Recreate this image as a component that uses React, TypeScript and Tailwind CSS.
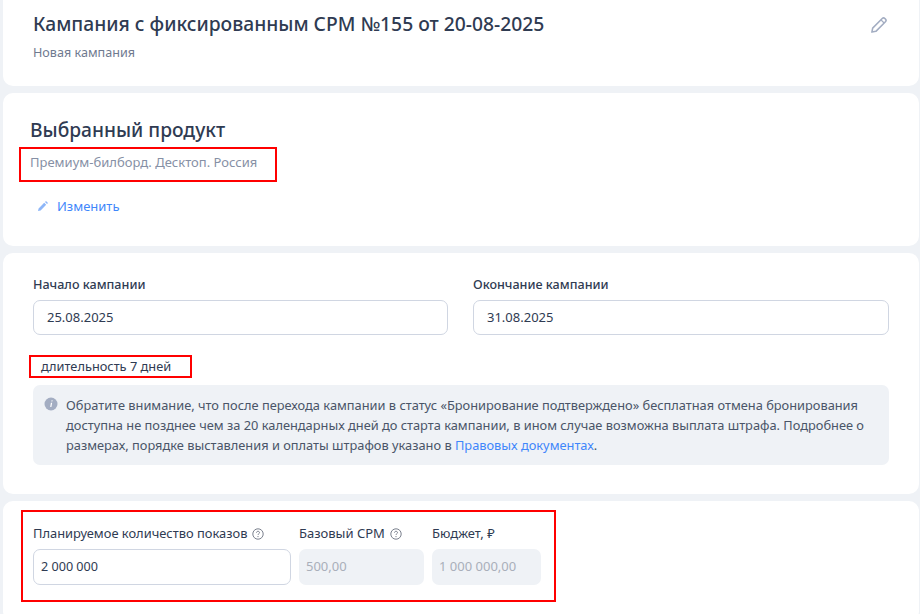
import React from "react";

const font = { fontFamily: '"Noto Sans", sans-serif' };

function Pencil({ className }: { className?: string }) {
  return (
    <svg viewBox="0 0 18 18" fill="none" className={className}>
      <path d="M2.6 15.4l.7-3.6 8.6-8.6a1.7 1.7 0 0 1 2.4 0l.5.5a1.7 1.7 0 0 1 0 2.4l-8.6 8.6-3.6.7z" stroke="currentColor" strokeWidth="1.4" strokeLinejoin="round" />
      <path d="M10.8 4.4l2.8 2.8" stroke="currentColor" strokeWidth="1.2" />
    </svg>
  );
}

function Help() {
  return (
    <svg viewBox="0 0 12 12" fill="none" className="h-[12px] w-[12px] text-[#6b7280]">
      <circle cx="6" cy="6" r="5.2" stroke="currentColor" strokeWidth="0.9" />
      <path d="M4.5 4.7c0-.9.7-1.4 1.5-1.4s1.5.5 1.5 1.3c0 1.2-1.5 1.2-1.5 2.3" stroke="currentColor" strokeWidth="0.9" />
      <circle cx="6" cy="8.6" r="0.6" fill="currentColor" />
    </svg>
  );
}

export default function App() {
  return (
    <div style={font} className="flex h-[614px] w-[920px] flex-col gap-[7px] overflow-hidden bg-[#eff2f6] pl-[3px] pr-[1px] text-[#2f3b52]">
      <section className="relative -mt-[10px] h-[96px] shrink-0 rounded-[10px] bg-white pl-[30px] pt-[20px]">
        <h1 className="text-[19.27px] leading-[28px] font-medium">Кампания с фиксированным СРМ №155 от 20-08-2025</h1>
        <p className="mt-[6px] text-[12.6px] leading-[18px] text-[#6f7a8f]">Новая кампания</p>
        <Pencil className="absolute right-[30px] top-[25px] h-[20px] w-[20px] text-[#a3adc2]" />
      </section>

      <section className="flex h-[153px] shrink-0 flex-col items-start rounded-[10px] bg-white pl-[27px] pt-[23px]">
        <h2 className="text-[19.2px] leading-[28px] font-medium">Выбранный продукт</h2>
        <div className="relative mt-[9px]">
          <p className="text-[13px] leading-[18px] text-[#8690a5]">Премиум-билборд. Десктоп. Россия</p>
          <div className="absolute -left-[11px] -top-[6px] h-[35px] w-[258px] border-[2px] border-[#ff0000]" />
        </div>
        <div className="mt-[26px] flex items-center gap-[8px] pl-[7px] text-[13px] leading-[18px] text-[#3f87fb]">
          <svg viewBox="0 0 12 12" className="h-[12px] w-[12px] text-[#8db6f8]">
            <path d="M1 11l.6-2.6 5.6-5.6 2 2-5.6 5.6zM8 2l1-1 2 2-1 1z" fill="currentColor" />
          </svg>
          <span>Изменить</span>
        </div>
      </section>

      <section className="h-[241px] shrink-0 rounded-[10px] bg-white px-[30px] pt-[23px]">
        <div className="flex gap-[25px]">
          <div className="w-[415px]">
            <label className="block text-[12.6px] leading-[18px] font-medium">Начало кампании</label>
            <div className="mt-[6px] flex h-[35px] items-center rounded-[7px] border border-[#d0d6e2] pl-[13px] text-[13px]">25.08.2025</div>
          </div>
          <div className="w-[416px]">
            <label className="block text-[12.6px] leading-[18px] font-medium">Окончание кампании</label>
            <div className="mt-[6px] flex h-[35px] items-center rounded-[7px] border border-[#d0d6e2] pl-[13px] text-[13px]">31.08.2025</div>
          </div>
        </div>
        <div className="relative mt-[22px] pl-[8px] text-[12.8px] leading-[18px]">
          длительность 7 дней
          <div className="absolute -left-[4px] -top-[2px] h-[23px] w-[163px] border-[2px] border-[#ff0000]" />
        </div>
        <div className="mt-[10px] flex h-[80px] w-[856px] gap-[8px] rounded-[7px] bg-[#eff2f6] pl-[11px] pt-[10px] text-[12.82px] leading-[20px] text-[#4a5568]">
          <svg viewBox="0 0 14 14" className="mt-[2px] h-[14px] w-[14px] shrink-0">
            <circle cx="7" cy="7" r="6.5" fill="#a3adc2" />
            <path d="M7.6 3.2h1l-.2 1.2h-1zM6.9 5.8h1.3l-.8 4.2H6.2z" fill="#fff" />
          </svg>
          <p className="w-[800px]">
            Обратите внимание, что после перехода кампании в статус «Бронирование подтверждено» бесплатная отмена бронирования доступна не позднее чем за 20 календарных дней до старта кампании, в ином случае возможна выплата штрафа. Подробнее о размерах, порядке выставления и оплаты штрафов указано в <span className="text-[#3f87fb]">Правовых документах</span>.
          </p>
        </div>
      </section>

      <section className="h-[120px] shrink-0 rounded-[10px] bg-white pl-[18px] pt-[9px]">
        <div className="flex h-[92px] w-[535px] gap-[8px] border-[2px] border-[#ff0000] pl-[10px] pt-[12px]">
          <div className="w-[258px]">
            <div className="flex h-[20px] items-center gap-[5px] text-[12.9px]">Планируемое количество показов <Help /></div>
            <div className="mt-[5px] flex h-[36px] items-center rounded-[7px] border border-[#d0d6e2] pl-[7px] text-[12.6px]">2 000 000</div>
          </div>
          <div className="w-[125px]">
            <div className="flex h-[20px] items-center gap-[5px] text-[13px]">Базовый СРМ <Help /></div>
            <div className="mt-[5px] flex h-[36px] items-center rounded-[7px] bg-[#eff2f6] pl-[7px] text-[13px] text-[#a9afba]">500,00</div>
          </div>
          <div className="w-[109px]">
            <div className="flex h-[20px] items-center text-[13px]">Бюджет, ₽</div>
            <div className="mt-[5px] flex h-[36px] items-center rounded-[7px] bg-[#eff2f6] pl-[7px] text-[13px] text-[#a9afba]">1 000 000,00</div>
          </div>
        </div>
      </section>
    </div>
  );
}
